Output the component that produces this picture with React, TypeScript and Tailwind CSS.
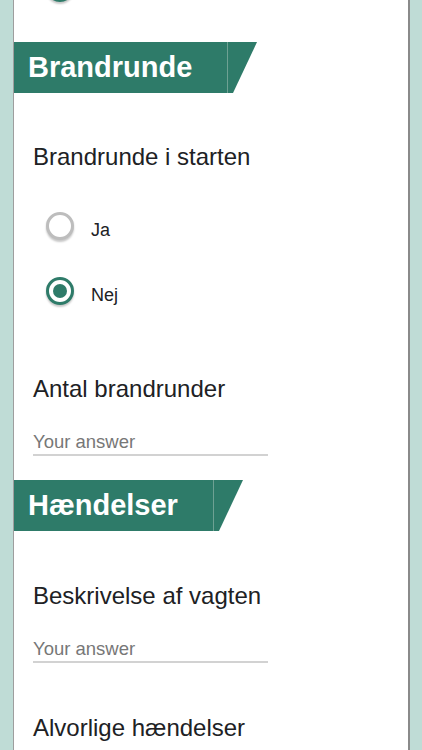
import React from 'react';

const Radio: React.FC<{ checked?: boolean }> = ({ checked }) => (
  <div
    className={
      'flex h-[28px] w-[28px] shrink-0 items-center justify-center rounded-full border-[3px] bg-white shadow-[0_2px_2px_rgba(0,0,0,0.22)] ' +
      (checked ? 'border-[#2e7b69]' : 'border-[#bdbdbd]')
    }
  >
    {checked && <div className="h-[14px] w-[14px] rounded-full bg-[#2e7b69]" />}
  </div>
);

const Banner: React.FC<{ title: string; className?: string }> = ({ title, className }) => (
  <div className={'flex h-[51px] shrink-0 ' + (className ?? '')}>
    <div className="flex items-center bg-[#2e7b69] pl-[14px] pr-[35px] text-[29px] font-bold leading-none text-white">
      {title}
    </div>
    <div className="w-px bg-[#6ea193]" />
    <svg width="29" height="51" viewBox="0 0 29 51" className="block">
      <polygon points="0,0 29,0 5,51 0,51" fill="#2e7b69" />
    </svg>
  </div>
);

const Question: React.FC<{ label: string; className?: string }> = ({ label, className }) => (
  <div className={'shrink-0 pl-[19px] text-[24px] leading-[28px] text-[#202124] ' + (className ?? '')}>{label}</div>
);

const TextAnswer: React.FC<{ className?: string }> = ({ className }) => (
  <div className={'ml-[19px] w-[235px] shrink-0 border-b-2 border-[#d2d2d2] text-[18.5px] leading-[24px] text-[#777777] ' + (className ?? '')}>
    Your answer
  </div>
);

const Option: React.FC<{ label: string; checked?: boolean; className?: string }> = ({ label, checked, className }) => (
  <div className={'flex shrink-0 items-start pl-[32px] ' + (className ?? '')}>
    <Radio checked={checked} />
    <span className="ml-[17px] mt-[8px] text-[18px] leading-[20px] text-[#202124]">{label}</span>
  </div>
);

export default function App() {
  return (
    <div className="h-[750px] overflow-hidden bg-[#bfdcd6] font-['Liberation_Sans',Arial,sans-serif]">
      <div className="ml-[13px] flex h-[750px] w-[397px] flex-col border-l border-r-2 border-l-[#9e9e9e] border-r-[#8a8a8a] bg-white">
        <div className="-mt-[26px] shrink-0 pl-[32px]">
          <Radio checked />
        </div>

        <Banner title="Brandrunde" className="mt-[40px]" />
        <Question label="Brandrunde i starten" className="mt-[50px]" />
        <Option label="Ja" className="mt-[41px]" />
        <Option label="Nej" checked className="mt-[37px]" />

        <Question label="Antal brandrunder" className="mt-[70px]" />
        <TextAnswer className="mt-[27px]" />

        <Banner title="Hændelser" className="mt-[24px]" />
        <Question label="Beskrivelse af vagten" className="mt-[51px]" />
        <TextAnswer className="mt-[27px]" />

        <Question label="Alvorlige hændelser" className="mt-[51px]" />
      </div>
    </div>
  );
}
